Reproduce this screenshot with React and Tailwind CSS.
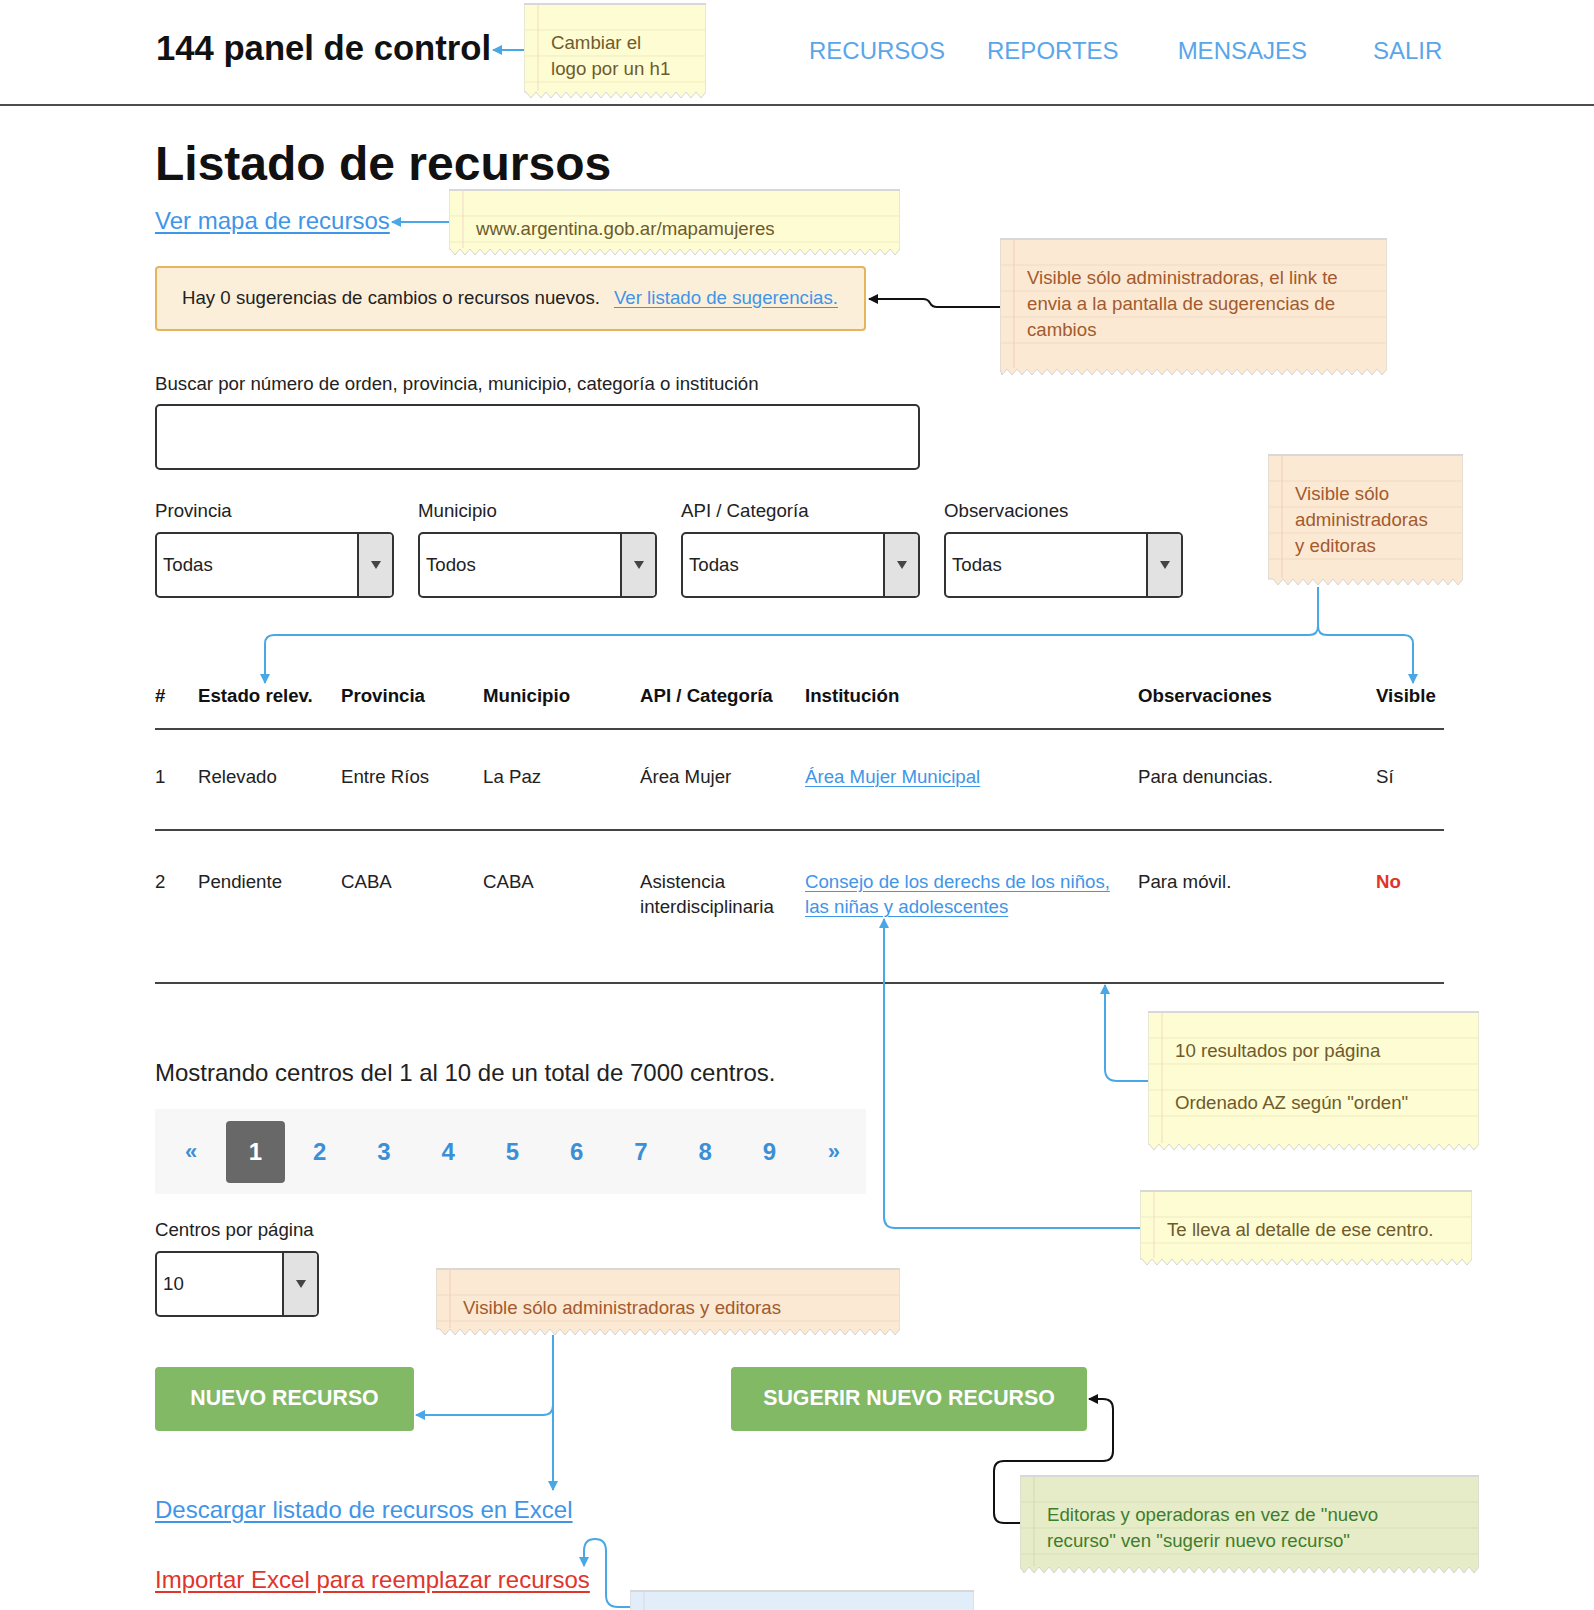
import React from "react";

const tones = {
  yellow: { bg: "#fefcd3", line: "#efebc1", margin: "#f1d9c6", text: "text-[#6e5b2c]" },
  orange: { bg: "#fbe9d3", line: "#f1dbc0", margin: "#efcdb8", text: "text-[#a35a2e]" },
  green: { bg: "#e5ecc7", line: "#d6e0b2", margin: "#d9d6b0", text: "text-[#3f7d2c]" },
  blue: { bg: "#e1eefa", line: "#d0e1ef", margin: "#d8d8ee", text: "text-[#2f5f8a]" },
};

// sticky note used for the wireframe annotations
function Note({ pos, w, h, tone = "yellow", lines = [] }) {
  const t = tones[tone];
  const rules = [];
  for (let y = 27; y < h - 10; y += 26) rules.push(y);
  let zig = `M0 0H${w}V${h - 6}`;
  let down = true;
  for (let x = w - 5; x > 0; x -= 5) {
    zig += `L${x} ${down ? h : h - 6}`;
    down = !down;
  }
  zig += `L0 ${h - 6}Z`;

  return (
    <div className={`absolute ${pos}`}>
      <svg width={w} height={h} className="absolute left-0 top-0">
        <path d={zig} fill={t.bg} stroke="#d4d4d4" strokeWidth="1" />
        {rules.map((y) => (
          <line key={y} x1="1" x2={w - 1} y1={y} y2={y} stroke={t.line} strokeWidth="1" />
        ))}
        <line x1="14" x2="14" y1="2" y2={h - 7} stroke={t.margin} strokeWidth="1" />
        <line x1="0" x2={w} y1="1" y2="1" stroke="#d8d8d8" strokeWidth="2" />
      </svg>
      <div className={`relative whitespace-nowrap pl-[27px] pt-[27px] text-[18.67px] leading-[26px] ${t.text}`}>
        {lines.map((l, i) => (
          <div key={i} className="h-[26px]">
            {l}
          </div>
        ))}
      </div>
    </div>
  );
}

function Select({ value, width }) {
  return (
    <div className={`flex overflow-hidden rounded-[5px] border-2 border-[#333] ${width}`}>
      <div className="flex flex-1 items-center pl-[6px] text-[18.67px] text-[#222]">{value}</div>
      <div className="flex w-[35px] items-center justify-center border-l-2 border-[#333] bg-[#e2e2e2]">
        <svg width="10" height="8" viewBox="0 0 10 8">
          <path d="M0 0H10L5 8z" fill="#444" />
        </svg>
      </div>
    </div>
  );
}

const filters = [
  { label: "Provincia", value: "Todas" },
  { label: "Municipio", value: "Todos" },
  { label: "API / Categoría", value: "Todas" },
  { label: "Observaciones", value: "Todas" },
];

const cols = "grid grid-cols-[43px_143px_142px_157px_165px_333px_238px_1fr]";

export default function App() {
  return (
    <div className="relative h-[1610px] w-[1594px] overflow-hidden bg-white font-['Liberation_Sans',Arial,sans-serif] text-[#222]">
      <header className="flex h-[106px] items-center border-b-2 border-[#4d4d4d] pb-[8px]">
        <h1 className="ml-[156px] w-[653px] text-[34.67px] font-bold leading-none text-[#111]">144 panel de control</h1>
        <nav className="mt-[6px] flex text-[24px] leading-none text-[#5aa6ea]">
          <a href="#">RECURSOS</a>
          <a href="#" className="ml-[42px]">REPORTES</a>
          <a href="#" className="ml-[59px]">MENSAJES</a>
          <a href="#" className="ml-[66px]">SALIR</a>
        </nav>
      </header>

      <main className="pl-[155px]">
        <h2 className="mt-[34px] text-[48px] font-bold leading-none text-[#111]">Listado de recursos</h2>
        <div className="mt-[21px] text-[24px] leading-none">
          <a href="#" className="text-[#3f95e8] underline underline-offset-[3px]">Ver mapa de recursos</a>
        </div>

        <div className="mt-[33px] flex h-[65px] w-[711px] items-center rounded-[4px] border-2 border-[#e5b45c] bg-[#fcefda] pb-[2px] pl-[25px] text-[18.67px]">
          <span>Hay 0 sugerencias de cambios o recursos nuevos.</span>
          <a href="#" className="ml-[14px] text-[#3f95e8] underline underline-offset-[3px]">Ver listado de sugerencias.</a>
        </div>

        <label className="mt-[44px] block text-[18.67px] leading-none">
          Buscar por número de orden, provincia, municipio, categoría o institución
        </label>
        <div className="mt-[10px] h-[66px] w-[765px] rounded-[5px] border-2 border-[#333]" />

        <div className="mt-[32px] flex gap-[24px]">
          {filters.map((f) => (
            <div key={f.label} className="flex flex-col">
              <span className="text-[18.67px] leading-none">{f.label}</span>
              <div className="mt-[12px] flex h-[66px]">
                <Select value={f.value} width="w-[239px]" />
              </div>
            </div>
          ))}
        </div>

        <div className="mt-[63px] w-[1289px] text-[18.67px]">
          <div className={`${cols} h-[69px] items-center border-b-2 border-[#444] pt-[3px] font-bold text-[#111]`}>
            <span>#</span>
            <span>Estado relev.</span>
            <span>Provincia</span>
            <span>Municipio</span>
            <span>API / Categoría</span>
            <span>Institución</span>
            <span>Observaciones</span>
            <span>Visible</span>
          </div>
          <div className={`${cols} h-[101px] items-start border-b-2 border-[#444] pt-[34px] leading-[25px]`}>
            <span>1</span>
            <span>Relevado</span>
            <span>Entre Ríos</span>
            <span>La Paz</span>
            <span>Área Mujer</span>
            <a href="#" className="text-[#3f95e8] underline underline-offset-[3px]">Área Mujer Municipal</a>
            <span>Para denuncias.</span>
            <span>Sí</span>
          </div>
          <div className={`${cols} h-[153px] items-start border-b-2 border-[#444] pt-[38px] leading-[25px]`}>
            <span>2</span>
            <span>Pendiente</span>
            <span>CABA</span>
            <span>CABA</span>
            <span>
              Asistencia
              <br />
              interdisciplinaria
            </span>
            <a href="#" className="text-[#3f95e8] underline underline-offset-[3px]">
              Consejo de los derechs de los niños,
              <br />
              las niñas y adolescentes
            </a>
            <span>Para móvil.</span>
            <span className="font-bold text-[#e0352b]">No</span>
          </div>
        </div>

        <p className="mt-[77px] text-[24px] leading-none">Mostrando centros del 1 al 10 de un total de 7000 centros.</p>

        <div className="mt-[24px] flex h-[85px] w-[711px] items-center bg-[#f7f7f7] pl-[4px] font-bold text-[#3a8fd6]">
          <span className="flex w-[65px] justify-center text-[22px]">«</span>
          <span className="flex w-[65px] justify-center">
            <span className="flex h-[62px] w-[59px] items-center justify-center rounded-[4px] bg-[#686868] text-[24px] text-white">1</span>
          </span>
          {[2, 3, 4, 5, 6, 7, 8, 9].map((n) => (
            <a key={n} href="#" className="flex w-[65px] justify-center text-[24px]">
              {n}
            </a>
          ))}
          <span className="flex w-[65px] justify-center text-[22px]">»</span>
        </div>

        <label className="mt-[27px] block text-[18.67px] leading-none">Centros por página</label>
        <div className="mt-[11px] flex h-[66px]">
          <Select value="10" width="w-[164px]" />
        </div>

        <div className="mt-[50px] flex gap-[317px]">
          <button className="h-[64px] w-[259px] rounded-[4px] bg-[#82b965] text-[21.33px] font-bold text-white">NUEVO RECURSO</button>
          <button className="h-[64px] w-[356px] rounded-[4px] bg-[#82b965] text-[21.33px] font-bold text-white">SUGERIR NUEVO RECURSO</button>
        </div>

        <div className="mt-[67px] text-[24px] leading-none">
          <a href="#" className="text-[#3f95e8] underline underline-offset-[3px]">Descargar listado de recursos en Excel</a>
        </div>
        <div className="mt-[46px] text-[24px] leading-none">
          <a href="#" className="text-[#e0352b] underline underline-offset-[3px]">Importar Excel para reemplazar recursos</a>
        </div>
      </main>

      {/* connectors between notes and page */}
      <svg width="1594" height="1610" className="pointer-events-none absolute left-0 top-0" fill="none">
        <defs>
          <marker id="ab" viewBox="0 0 10 10" refX="9" refY="5" markerWidth="10" markerHeight="10" markerUnits="userSpaceOnUse" orient="auto">
            <path d="M0 0L10 5L0 10z" fill="#4aa7e6" />
          </marker>
          <marker id="ak" viewBox="0 0 10 10" refX="9" refY="5" markerWidth="10" markerHeight="10" markerUnits="userSpaceOnUse" orient="auto">
            <path d="M0 0L10 5L0 10z" fill="#111" />
          </marker>
        </defs>
        <g stroke="#4aa7e6" strokeWidth="2">
          <path d="M524 50H493" markerEnd="url(#ab)" />
          <path d="M449 222H392" markerEnd="url(#ab)" />
          <path d="M1318 587V626Q1318 635 1309 635H274Q265 635 265 644V683" markerEnd="url(#ab)" />
          <path d="M1318 626Q1318 635 1327 635H1404Q1413 635 1413 644V683" markerEnd="url(#ab)" />
          <path d="M1140 1228H895Q884 1228 884 1217V919" markerEnd="url(#ab)" />
          <path d="M1148 1081H1117Q1105 1081 1105 1069V985" markerEnd="url(#ab)" />
          <path d="M553 1335V1490" markerEnd="url(#ab)" />
          <path d="M553 1405Q553 1415 543 1415H416" markerEnd="url(#ab)" />
          <path d="M630 1607H618Q606 1607 606 1595V1551Q606 1539 595 1539Q584 1539 584 1551V1566" markerEnd="url(#ab)" />
        </g>
        <g stroke="#111" strokeWidth="2">
          <path d="M1000 307H937Q932 307 930 303Q928 299 923 299H869" markerEnd="url(#ak)" />
          <path d="M1020 1523H1004Q994 1523 994 1513V1471Q994 1461 1004 1461H1103Q1113 1461 1113 1451V1409Q1113 1399 1103 1399H1089" markerEnd="url(#ak)" />
        </g>
      </svg>

      <Note pos="left-[524px] top-[3px]" w={182} h={95} lines={["Cambiar el", "logo por un h1"]} />
      <Note pos="left-[449px] top-[189px]" w={451} h={66} lines={["www.argentina.gob.ar/mapamujeres"]} />
      <Note
        pos="left-[1000px] top-[238px]"
        w={387}
        h={137}
        tone="orange"
        lines={["Visible sólo administradoras, el link te", "envia a la pantalla de sugerencias de", "cambios"]}
      />
      <Note pos="left-[1268px] top-[454px]" w={195} h={131} tone="orange" lines={["Visible sólo", "administradoras", "y editoras"]} />
      <Note pos="left-[1148px] top-[1011px]" w={331} h={139} lines={["10 resultados por página", "", "Ordenado AZ según \"orden\""]} />
      <Note pos="left-[1140px] top-[1190px]" w={332} h={75} lines={["Te lleva al detalle de ese centro."]} />
      <Note pos="left-[436px] top-[1268px]" w={464} h={67} tone="orange" lines={["Visible sólo administradoras y editoras"]} />
      <Note
        pos="left-[1020px] top-[1475px]"
        w={459}
        h={98}
        tone="green"
        lines={["Editoras y operadoras en vez de \"nuevo", "recurso\" ven \"sugerir nuevo recurso\""]}
      />
      <Note pos="left-[630px] top-[1590px]" w={344} h={60} tone="blue" lines={[]} />
    </div>
  );
}
